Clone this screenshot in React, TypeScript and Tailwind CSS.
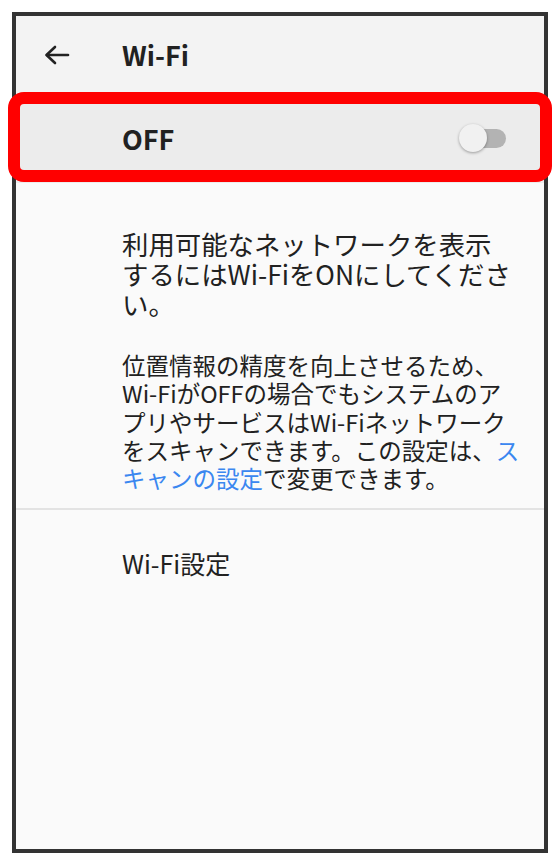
export default function App() {
  return (
    <div className="relative w-[560px] h-[865px] bg-white pl-[12px] pt-[12px] font-['Noto_Sans_CJK_JP',sans-serif] text-[#212121]">
      <div className="w-[536px] h-[841px] border-4 border-[#333333] bg-[#fafafa] flex flex-col">
        {/* app bar */}
        <div className="h-[77px] bg-[#f3f3f3] flex items-center">
          <div className="w-[106px] pl-[28px] flex items-center">
            <svg width="26" height="20" viewBox="0 0 26 20" fill="none" stroke="#222" strokeWidth="2.6" strokeLinecap="round" strokeLinejoin="round">
              <path d="M24 10H3" />
              <path d="M11 2L2.5 10L11 18" />
            </svg>
          </div>
          <span className="text-[27px] font-bold leading-none">Wi-Fi</span>
        </div>

        {/* master switch */}
        <div className="h-[90px] bg-[#ececec] flex items-center justify-between pl-[106px] pr-[38px]">
          <span className="text-[27px] font-bold leading-none">OFF</span>
          <div className="relative w-[47px] h-[28px]">
            <div className="absolute right-0 top-[4.5px] w-[36px] h-[19px] rounded-full bg-[#b3b3b3]" />
            <div className="absolute left-0 top-0 w-[28px] h-[28px] rounded-full bg-[#f1f1f1] shadow-[0_1px_3px_rgba(0,0,0,0.35)]" />
          </div>
        </div>

        <div className="pl-[106px] pt-[46px] whitespace-nowrap">
          <p className="text-[26.4px] leading-[30px]">
            利用可能なネットワークを表示
            <br />
            するにはWi-FiをONにしてくださ
            <br />
            い。
          </p>
          <p className="mt-[32px] text-[23.5px] leading-[28.3px]">
            位置情報の精度を向上させるため、
            <br />
            Wi-FiがOFFの場合でもシステムのア
            <br />
            プリやサービスはWi-Fiネットワーク
            <br />
            をスキャンできます。この設定は、<span className="text-[#3b87f0]">ス</span>
            <br />
            <span className="text-[#3b87f0]">キャンの設定</span>で変更できます。
          </p>
        </div>

        <div className="mt-[16px] h-[2px] bg-[#e3e3e3]" />

        <div className="pl-[106px] pt-[38px]">
          <span className="text-[25px] leading-[30px]">Wi-Fi設定</span>
        </div>
      </div>

      {/* annotation frame */}
      <div className="absolute left-[8px] top-[92px] w-[544px] h-[90px] border-[12px] border-[#ff0000] rounded-[16px]" />
    </div>
  );
}
